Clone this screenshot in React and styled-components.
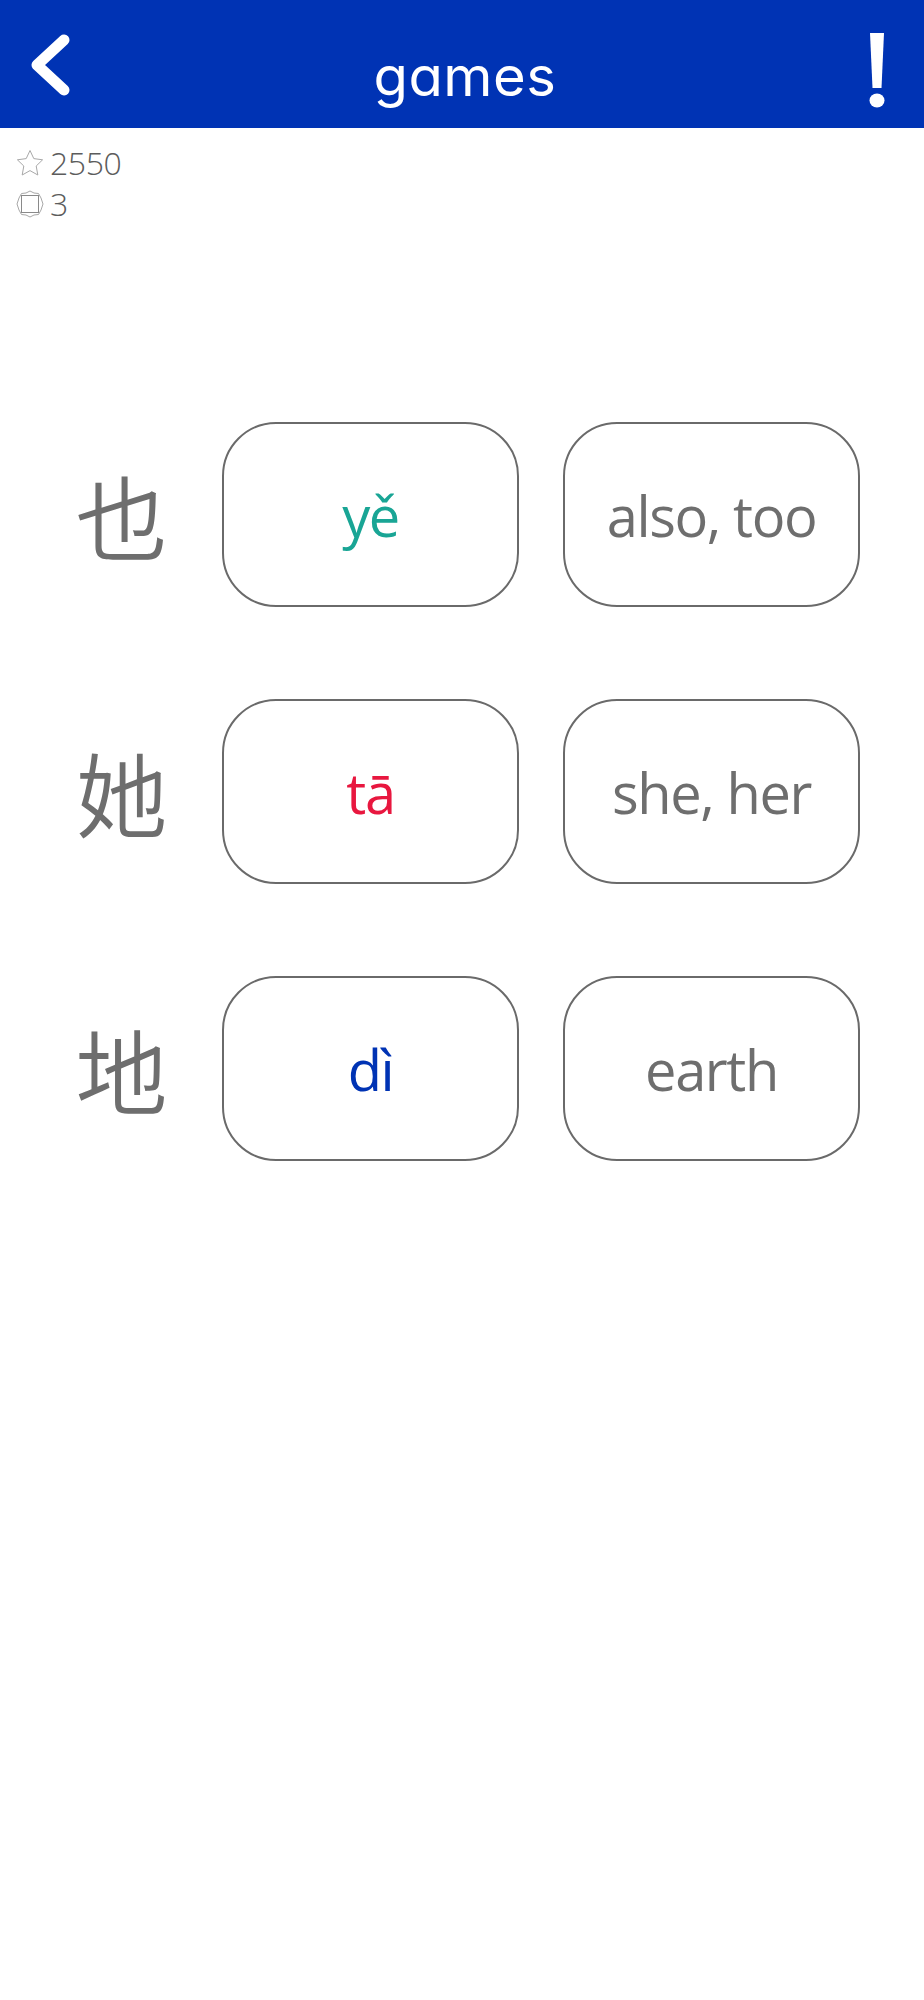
import React from "react";
import styled, { createGlobalStyle } from "styled-components";

const Global = createGlobalStyle`
  html, body { margin: 0; padding: 0; background: #fff; }
  body { font-family: "Open Sans", "Noto Sans", sans-serif; }
`;

const Page = styled.div`
  width: 924px;
  height: 2000px;
  background: #fff;
  overflow: hidden;
`;

const Header = styled.header`
  height: 128px;
  background: #0033b4;
  display: grid;
  grid-template-columns: 120px 1fr 120px;
  color: #fff;
`;

const BackButton = styled.div`
  padding: 33px 0 0 29px;
`;

const Title = styled.h1`
  margin: 0;
  padding-top: 47px;
  text-align: center;
  font: 400 54px/60px "Inter", sans-serif;
  font-feature-settings: "cv11" 1;
  letter-spacing: 0.5px;
  transform: translateX(3px) scaleX(1.04);
  color: #fff;
`;

const Alert = styled.div`
  padding: 33px 39px 0 0;
  display: flex;
  justify-content: flex-end;
`;

const Stats = styled.div`
  padding: 15px 0 0 16px;
  display: flex;
  flex-direction: column;
  gap: 2px;
`;

const Stat = styled.div`
  display: flex;
  align-items: center;
  gap: 6px;
  height: 39px;
  font-size: 32px;
  font-weight: 300;
  letter-spacing: -0.4px;
  color: #5c5c5c;
`;

const Board = styled.main`
  margin-top: 199px;
  display: flex;
  flex-direction: column;
  gap: 92px;
`;

const Row = styled.section`
  display: grid;
  grid-template-columns: 222px 297px 341px;
  height: 185px;
  & > :last-child { margin-left: 44px; }
`;

const Hanzi = styled.div`
  display: flex;
  align-items: center;
  justify-content: center;
  padding: 0 0 2px 21px;
  font: 350 92px/1 "Noto Sans CJK SC", sans-serif;
  color: #6e6e6e;
`;

const Card = styled.button`
  box-sizing: border-box;
  width: 297px;
  height: 185px;
  padding: 0;
  border: 2px solid #6a6a6a;
  border-radius: 54px;
  background: #fff;
  font: 400 56px/1 "Open Sans", sans-serif;
  letter-spacing: -1.4px;
  color: ${(p) => p.$color || "#6e6e6e"};
`;

const rows = [
  { hanzi: "也", pinyin: "yě", color: "#19a595", meaning: "also, too" },
  { hanzi: "她", pinyin: "tā", color: "#e8173f", meaning: "she, her" },
  { hanzi: "地", pinyin: "dì", color: "#0033b4", meaning: "earth" },
];

export default function App() {
  return (
    <Page>
      <Global />
      <Header>
        <BackButton>
          <svg width="44" height="64" viewBox="0 0 44 64" fill="none">
            <path d="M35 7 L8 32 L35 57" stroke="#fff" strokeWidth="11" strokeLinecap="round" strokeLinejoin="round" />
          </svg>
        </BackButton>
        <Title>games</Title>
        <Alert>
          <svg width="16" height="76" viewBox="0 0 16 76">
            <path d="M1 0 H15 L12.5 55 H3.5 Z" fill="#fff" />
            <ellipse cx="8" cy="67.5" rx="7.5" ry="7" fill="#fff" />
          </svg>
        </Alert>
      </Header>
      <Stats>
        <Stat>
          <svg width="28" height="28" viewBox="0 0 28 28" fill="none">
            <path d="M14 1.5 L17.8 9.6 L26.6 10.8 L20.2 17 L21.8 26 L14 21.6 L6.2 26 L7.8 17 L1.4 10.8 L10.2 9.6 Z" stroke="#a8a8a8" strokeWidth="1" strokeLinejoin="round" />
          </svg>
          2550
        </Stat>
        <Stat>
          <svg width="28" height="28" viewBox="0 0 28 28" fill="none">
            <path d="M14 1 L18 3 L22.5 3.5 L25 8 L27 14 L25 20 L22.5 24.5 L18 25 L14 27 L10 25 L5.5 24.5 L3 20 L1 14 L3 8 L5.5 3.5 L10 3 Z" stroke="#a8a8a8" strokeWidth="1" strokeLinejoin="round" />
            <rect x="5.5" y="5.5" width="17" height="17" stroke="#8a8a8a" strokeWidth="1" />
          </svg>
          3
        </Stat>
      </Stats>
      <Board>
        {rows.map((r) => (
          <Row key={r.hanzi}>
            <Hanzi lang="zh">{r.hanzi}</Hanzi>
            <Card $color={r.color}>{r.pinyin}</Card>
            <Card>{r.meaning}</Card>
          </Row>
        ))}
      </Board>
    </Page>
  );
}
